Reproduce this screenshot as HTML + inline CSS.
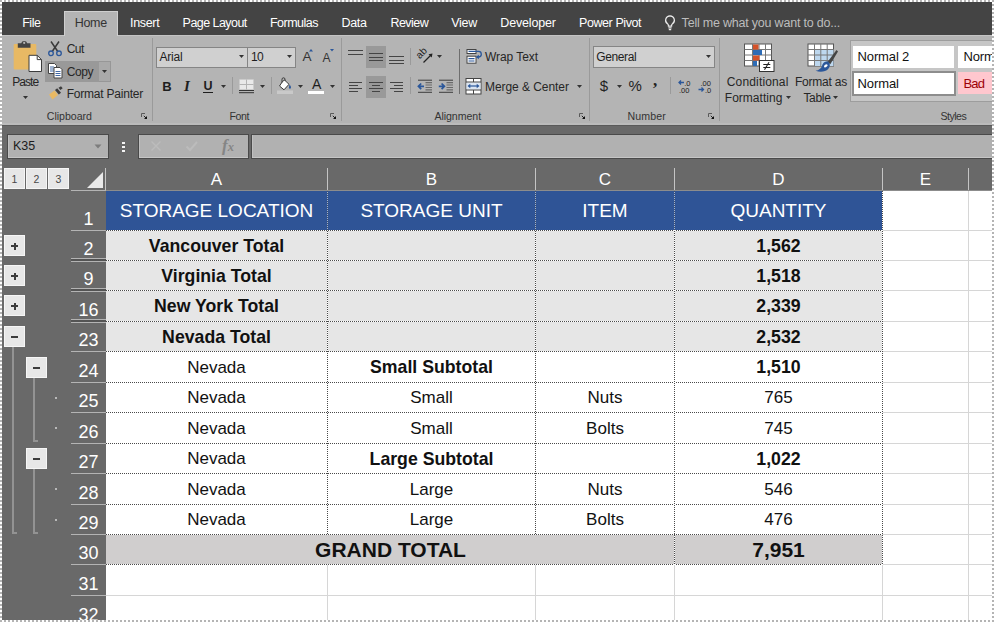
<!DOCTYPE html>
<html><head><meta charset="utf-8"><title>Excel Subtotals</title>
<style>
*{box-sizing:border-box;margin:0;padding:0}
html,body{width:994px;height:622px;overflow:hidden;background:#fff}
body{position:relative;font-family:"Liberation Sans",Arial,sans-serif;color:#222}
.abs{position:absolute}
.fr{z-index:20}
/* bands */
#tabs{left:2px;top:2px;width:992px;height:33px;background:#444}
#ribbon{left:2px;top:35px;width:992px;height:90px;background:#b4b4b4;border-top:1px solid #c4c4c4;border-bottom:2px solid #bbb}
#dark{left:2px;top:125px;width:992px;height:65px;background:#696969;border-top:1px solid #5a5a5a}
#leftdark{left:2px;top:190px;width:104px;height:432px;background:#696969}
/* tab labels */
.tab{position:absolute;top:15px;height:18px;line-height:18px;font-size:12.5px;color:#fff;white-space:nowrap}
#home{left:64px;top:11px;width:54px;height:25px;background:#b4b4b4}
/* ribbon text */
.rt{position:absolute;font-size:12.5px;line-height:16px;color:#262626;white-space:nowrap}
.gl{position:absolute;top:109px;font-size:11.5px;line-height:14px;color:#333;white-space:nowrap}
.vsep{position:absolute;width:1px;background:#9c9c9c}
/* formula bar */
.fbox{position:absolute;top:134px;height:25px;background:#b1b1b1;border:1px solid #4a4a4a;box-shadow:inset 0 -1px 0 #c6c6c6,inset 1px 0 0 #c0c0c0}
/* grid */
.ch{position:absolute;top:168px;height:22px;line-height:23px;color:#fff;font-size:17px;text-align:center}
.chs{position:absolute;top:168px;width:1px;height:23px;background:#c4c4c4}
.rh{position:absolute;left:71px;width:35px;height:20px;line-height:20px;color:#fff;font-size:18px;text-align:center}
.cell{position:absolute;font-size:17px;text-align:center;color:#111;white-space:nowrap;overflow:hidden}
.b{font-weight:bold;font-size:17.7px}
.ob{position:absolute;width:21px;height:21px;background:#e7e7e7;border:1px solid #f6f6f6;color:#484848;font-size:10.500px;line-height:20px;text-align:center}
.pm i{position:absolute;background:#3c3c3c}.pm .h{left:6px;top:9px;width:7px;height:2px}.pm .v{left:8.500px;top:6.500px;width:2px;height:7px}
</style></head><body>
<!-- dotted frame -->
<div class="abs fr" style="left:0;top:0;width:994px;height:2px;background:repeating-linear-gradient(90deg,#b4b4b4 0 2px,#fff 2px 4px)"></div>
<div class="abs fr" style="left:0;top:620px;width:994px;height:2px;background:repeating-linear-gradient(90deg,#b4b4b4 0 2px,#fff 2px 4px)"></div>
<div class="abs fr" style="left:0;top:0;width:2px;height:622px;background:repeating-linear-gradient(180deg,#b4b4b4 0 2px,#fff 2px 4px)"></div>
<div class="abs fr" style="left:992px;top:0;width:2px;height:622px;background:repeating-linear-gradient(180deg,#b4b4b4 0 2px,#fff 2px 4px)"></div>

<div id="tabs" class="abs"></div>
<div id="ribbon" class="abs"></div>
<div id="dark" class="abs"></div>
<div id="leftdark" class="abs"></div>


<!--RIBBON-->
<div id="home" class="abs" style="border:1px solid #cfcfcf;border-bottom:0"></div>
<svg class="abs" style="left:663px;top:14px" width="14" height="18" viewBox="0 0 14 18"><path d="M7 1.800a4.400 4.400 0 0 0-2.500 8c.6.500.9 1.100.9 1.800v.6h3.200v-.6c0-.7.300-1.300.9-1.800A4.400 4.400 0 0 0 7 1.800z" fill="none" stroke="#ececec" stroke-width="1.200"/><path d="M5.400 13.800h3.200M5.800 15.600h2.400" stroke="#ececec" stroke-width="1.200"/></svg>
<svg class="abs" style="left:12px;top:40px" width="31" height="33" viewBox="0 0 31 33">
<rect x="1.700" y="4" width="22.600" height="25.500" rx="1" fill="#e8b964"/>
<path d="M5.800 3.200h3.400a3.100 3.100 0 0 1 6 0h3.300v4.500H5.800z" fill="#444"/>
<circle cx="12.200" cy="2.900" r="1.100" fill="#b4b4b4"/>
<path d="M17 15.300h8.200l4.300 4.300V31.500H17z" fill="#fff" stroke="#3c3c3c" stroke-width="1"/>
<path d="M25.200 15.300v4.300h4.300" fill="none" stroke="#3c3c3c" stroke-width="1"/>
</svg>
<svg class="abs" style="left:23px;top:96px" width="5" height="3" viewBox="0 0 5 3"><polygon points="0,0 5,0 2.5,3" fill="#333"/></svg>
<svg class="abs" style="left:47px;top:40px" width="16" height="17" viewBox="0 0 16 17">
<path d="M4 1.500L10.800 11.500M12 1.500L5.200 11.500" stroke="#3a3a3a" stroke-width="1.500" fill="none"/>
<circle cx="4" cy="13.300" r="2.300" fill="none" stroke="#2b579a" stroke-width="1.300"/>
<circle cx="12" cy="13.300" r="2.300" fill="none" stroke="#2b579a" stroke-width="1.300"/>
</svg>
<div class="abs" style="left:45px;top:61px;width:54px;height:21px;background:#999"></div>
<div class="abs" style="left:99px;top:61px;width:12px;height:21px;background:#a9a9a9;border:1px solid #979797;border-left:0"></div>
<svg class="abs" style="left:48px;top:63px" width="15" height="16" viewBox="0 0 15 16">
<path d="M0.500 0.500h6l2 2v8h-8z" fill="#fff" stroke="#444" stroke-width="1"/>
<path d="M2 4h4M2 6h4M2 8h4" stroke="#2b579a" stroke-width="0.900"/>
<path d="M6 4.500h6l2 2v8.500h-8z" fill="#fff" stroke="#444" stroke-width="1"/>
<path d="M7.500 8.500h5M7.500 10.500h5M7.500 12.500h5" stroke="#2b579a" stroke-width="0.900"/>
</svg>
<svg class="abs" style="left:101.5px;top:70px" width="5" height="3" viewBox="0 0 5 3"><polygon points="0,0 5,0 2.5,3" fill="#333"/></svg>
<svg class="abs" style="left:48px;top:86px" width="16" height="15" viewBox="0 0 16 15">
<path d="M1 8.500l5.500-4 3.500 4.500-5.500 4.500z" fill="#e8b964"/>
<path d="M7 4l2.200-1.800 3.800 4.600L10.800 8.500z" fill="#3c3c3c"/>
<path d="M10.500 1.800L13 0.300l1.700 2L12.300 4z" fill="#3c3c3c"/>
</svg>
<svg class="abs" style="left:141px;top:113px" width="7" height="7" viewBox="0 0 7 7"><path d="M0.500 4V0.500H4" fill="none" stroke="#5a5a5a" stroke-width="1"/><path d="M2.800 2.800L5 5" fill="none" stroke="#222" stroke-width="1"/><path d="M6 3v3H3z" fill="#111"/></svg>
<div class="vsep" style="left:152px;top:38px;height:83px;background:#9a9a9a"></div>
<div class="abs" style="left:156px;top:47px;width:92px;height:21px;background:#d0d0d0;border:1px solid #858585"></div>
<div class="abs" style="left:247px;top:47px;width:49px;height:21px;background:#d0d0d0;border:1px solid #858585"></div>
<svg class="abs" style="left:238.7px;top:54.5px" width="5" height="3" viewBox="0 0 5 3"><polygon points="0,0 5,0 2.5,3" fill="#333"/></svg>
<svg class="abs" style="left:286.7px;top:54.5px" width="5" height="3" viewBox="0 0 5 3"><polygon points="0,0 5,0 2.5,3" fill="#333"/></svg>
<svg class="abs" style="left:309px;top:48.500px" width="4" height="3" viewBox="0 0 4 3"><polygon points="0,2.500 4,2.500 2,0" fill="#2b579a"/></svg>
<svg class="abs" style="left:329.500px;top:49px" width="4" height="3" viewBox="0 0 4 3"><polygon points="0,0 4,0 2,2.500" fill="#2b579a"/></svg>
<div class="abs" style="left:203px;top:92px;width:10px;height:1px;background:#1e1e1e"></div>
<svg class="abs" style="left:221px;top:84.5px" width="5" height="3" viewBox="0 0 5 3"><polygon points="0,0 5,0 2.5,3" fill="#333"/></svg>
<div class="vsep" style="left:232px;top:77px;height:17px;background:#9a9a9a"></div>
<svg class="abs" style="left:239px;top:79px" width="15" height="15" viewBox="0 0 15 15">
<rect x="0.500" y="0.500" width="14" height="10" fill="#e9e9e9" stroke="#c9c9c9" stroke-dasharray="1 1"/>
<path d="M7.500 0.500v10M0.500 5.500h14" stroke="#b4b4b4" stroke-width="1"/>
<path d="M0 11.500h15M0 13.700h15" stroke="#333" stroke-width="1"/>
</svg>
<svg class="abs" style="left:259.5px;top:84.5px" width="5" height="3" viewBox="0 0 5 3"><polygon points="0,0 5,0 2.5,3" fill="#333"/></svg>
<div class="vsep" style="left:271px;top:77px;height:17px;background:#9a9a9a"></div>
<svg class="abs" style="left:277px;top:77px" width="17" height="17" viewBox="0 0 17 17">
<path d="M5.500 4.500L2.500 9l4.500 3.800 5-5.500L7.500 3z" fill="#fff" stroke="#3a3a3a" stroke-width="1"/>
<path d="M5 5.500V2.300a1.500 1.500 0 0 1 3 0V4" fill="none" stroke="#3a3a3a" stroke-width="1"/>
<path d="M12.500 7.500c1.500 1.800 2 3 1 4-1 .6-2-.4-1.500-1.500z" fill="#2b579a"/>
<rect x="0" y="13.500" width="16" height="3.500" fill="#c9c9c9"/>
</svg>
<svg class="abs" style="left:298px;top:84.5px" width="5" height="3" viewBox="0 0 5 3"><polygon points="0,0 5,0 2.5,3" fill="#333"/></svg>
<div class="abs" style="left:308px;top:90.500px;width:16px;height:3.500px;background:#fff"></div>
<svg class="abs" style="left:329.5px;top:84.5px" width="5" height="3" viewBox="0 0 5 3"><polygon points="0,0 5,0 2.5,3" fill="#333"/></svg>
<svg class="abs" style="left:330px;top:113px" width="7" height="7" viewBox="0 0 7 7"><path d="M0.500 4V0.500H4" fill="none" stroke="#5a5a5a" stroke-width="1"/><path d="M2.800 2.800L5 5" fill="none" stroke="#222" stroke-width="1"/><path d="M6 3v3H3z" fill="#111"/></svg>
<div class="vsep" style="left:341px;top:38px;height:83px;background:#9a9a9a"></div>
<div class="abs" style="left:366px;top:46px;width:20px;height:22px;background:#999"></div>
<div class="abs" style="left:366px;top:76px;width:20px;height:22px;background:#999"></div>
<div class="abs" style="left:348px;top:50px;width:15px;height:1px;background:#444"></div>
<div class="abs" style="left:348px;top:54px;width:15px;height:1px;background:#444"></div>
<div class="abs" style="left:369px;top:53px;width:14px;height:1px;background:#444"></div>
<div class="abs" style="left:369px;top:56.5px;width:14px;height:1px;background:#444"></div>
<div class="abs" style="left:369px;top:60px;width:14px;height:1px;background:#444"></div>
<div class="abs" style="left:389px;top:56px;width:15px;height:1px;background:#444"></div>
<div class="abs" style="left:389px;top:59.5px;width:15px;height:1px;background:#444"></div>
<div class="abs" style="left:389px;top:63px;width:15px;height:1px;background:#444"></div>
<div class="vsep" style="left:410px;top:48px;height:17px;background:#9a9a9a"></div>
<svg class="abs" style="left:416px;top:48px" width="18" height="16" viewBox="0 0 18 16">
<text x="0" y="0" font-family="Liberation Sans" font-size="10" fill="#222" transform="translate(3.800 11.300) rotate(-45)">ab</text>
<path d="M7.500 14.500L15 7" fill="none" stroke="#222" stroke-width="1.200"/>
<path d="M16.500 5.500l-4 .8 3.200 3.200z" fill="#222"/>
</svg>
<svg class="abs" style="left:436.5px;top:55px" width="5" height="3" viewBox="0 0 5 3"><polygon points="0,0 5,0 2.5,3" fill="#333"/></svg>
<div class="vsep" style="left:459px;top:49px;height:45px;background:#6e6e6e"></div>
<svg class="abs" style="left:465px;top:48px" width="18" height="17" viewBox="0 0 18 17">
<rect x="2" y="1.500" width="9" height="4" fill="#fff" stroke="#444"/>
<rect x="2" y="8.200" width="9" height="7" fill="#fff" stroke="#444"/>
<path d="M3.500 10.600h6M3.500 13h6" stroke="#2b579a" stroke-width="1.100"/>
<path d="M3.500 3.400H13.500a2.800 2.800 0 0 1 0 5.600H12.500" fill="none" stroke="#2b579a" stroke-width="1.300"/>
<path d="M10.800 9l3-2.300v4.600z" fill="#2b579a"/>
</svg>
<div class="abs" style="left:349px;top:81.5px;width:13px;height:1px;background:#444"></div>
<div class="abs" style="left:349px;top:84.5px;width:9px;height:1px;background:#444"></div>
<div class="abs" style="left:349px;top:87.5px;width:13px;height:1px;background:#444"></div>
<div class="abs" style="left:349px;top:90.5px;width:9px;height:1px;background:#444"></div>
<div class="abs" style="left:369.0px;top:81.5px;width:14px;height:1px;background:#444"></div>
<div class="abs" style="left:372.0px;top:84.5px;width:8px;height:1px;background:#444"></div>
<div class="abs" style="left:369.0px;top:87.5px;width:14px;height:1px;background:#444"></div>
<div class="abs" style="left:372.0px;top:90.5px;width:8px;height:1px;background:#444"></div>
<div class="abs" style="left:390px;top:81.5px;width:13px;height:1px;background:#444"></div>
<div class="abs" style="left:394px;top:84.5px;width:9px;height:1px;background:#444"></div>
<div class="abs" style="left:390px;top:87.5px;width:13px;height:1px;background:#444"></div>
<div class="abs" style="left:394px;top:90.5px;width:9px;height:1px;background:#444"></div>
<div class="vsep" style="left:410px;top:77px;height:17px;background:#9a9a9a"></div>
<svg class="abs" style="left:417px;top:79px" width="16" height="15" viewBox="0 0 16 15">
<path d="M1 1.200h14M1 13.300h14" stroke="#3c3c3c" stroke-width="1" fill="none"/>
<path d="M8.500 3.600h6.500M8.500 6h6.500M8.500 8.500h6.500M8.500 10.900h6.500" stroke="#6a6a6a" stroke-width="1.100" fill="none"/>
<path d="M7 7.300H1.800M4.200 4.500L1.400 7.300l2.800 2.800" stroke="#2b579a" stroke-width="1.700" fill="none"/>
</svg>
<svg class="abs" style="left:437.8px;top:79px" width="16" height="15" viewBox="0 0 16 15">
<path d="M1 1.200h14M1 13.300h14" stroke="#3c3c3c" stroke-width="1" fill="none"/>
<path d="M8.500 3.600h6.500M8.500 6h6.500M8.500 8.500h6.500M8.500 10.900h6.500" stroke="#6a6a6a" stroke-width="1.100" fill="none"/>
<path d="M0.800 7.300H6M3.600 4.500l2.800 2.800-2.800 2.800" stroke="#2b579a" stroke-width="1.700" fill="none"/>
</svg>
<svg class="abs" style="left:465px;top:78px" width="17" height="17" viewBox="0 0 17 17">
<rect x="1" y="0.500" width="15" height="15.500" fill="#fff" stroke="#444"/>
<rect x="1.500" y="4.500" width="14" height="7" fill="#dbe5f1"/>
<path d="M1 4h15M1 12h15M8.500 0.500v3.500M8.500 12v4" stroke="#444" stroke-width="1" fill="none"/>
<path d="M4 8h9" stroke="#2b579a" stroke-width="1.200" fill="none"/>
<path d="M2.500 8l2.800-2.300v4.600zM14.500 8l-2.800-2.300v4.600z" fill="#2b579a"/>
</svg>
<svg class="abs" style="left:577.3px;top:85px" width="5" height="3" viewBox="0 0 5 3"><polygon points="0,0 5,0 2.5,3" fill="#333"/></svg>
<svg class="abs" style="left:578.5px;top:113px" width="7" height="7" viewBox="0 0 7 7"><path d="M0.500 4V0.500H4" fill="none" stroke="#5a5a5a" stroke-width="1"/><path d="M2.800 2.800L5 5" fill="none" stroke="#222" stroke-width="1"/><path d="M6 3v3H3z" fill="#111"/></svg>
<div class="vsep" style="left:589px;top:38px;height:83px;background:#9a9a9a"></div>
<div class="abs" style="left:593px;top:46px;width:122px;height:22px;background:#d0d0d0;border:1px solid #858585"></div>
<svg class="abs" style="left:706.3px;top:55px" width="5" height="3" viewBox="0 0 5 3"><polygon points="0,0 5,0 2.5,3" fill="#333"/></svg>
<svg class="abs" style="left:616.8px;top:84.8px" width="5" height="3" viewBox="0 0 5 3"><polygon points="0,0 5,0 2.5,3" fill="#333"/></svg>
<div class="vsep" style="left:670px;top:77px;height:17px;background:#9a9a9a"></div>
<svg class="abs" style="left:677.5px;top:79px" width="14" height="15" viewBox="0 0 14 15">
<path d="M6 3.500H1M3 1.500L1 3.500l2 2" stroke="#2b579a" stroke-width="1.300" fill="none"/>
<text x="6.200" y="6.500" font-family="Liberation Sans" font-size="7.500" fill="#222">.0</text>
<text x="1" y="14" font-family="Liberation Sans" font-size="7.500" fill="#222">.00</text></svg>
<svg class="abs" style="left:698px;top:79px" width="14" height="15" viewBox="0 0 14 15">
<text x="2.500" y="6.500" font-family="Liberation Sans" font-size="7.500" fill="#222">.00</text>
<path d="M0.500 10.500H5.500M3.500 8.500l2 2-2 2" stroke="#2b579a" stroke-width="1.300" fill="none"/>
<text x="7" y="14" font-family="Liberation Sans" font-size="7.500" fill="#222">.0</text></svg>
<svg class="abs" style="left:708px;top:113px" width="7" height="7" viewBox="0 0 7 7"><path d="M0.500 4V0.500H4" fill="none" stroke="#5a5a5a" stroke-width="1"/><path d="M2.800 2.800L5 5" fill="none" stroke="#222" stroke-width="1"/><path d="M6 3v3H3z" fill="#111"/></svg>
<div class="vsep" style="left:719px;top:38px;height:83px;background:#9a9a9a"></div>
<svg class="abs" style="left:744px;top:43px" width="31" height="30" viewBox="0 0 31 30">
<rect x="0.500" y="1" width="27" height="22" fill="#fff" stroke="#555"/>
<path d="M0.500 6.500h27M0.500 12h27M0.500 17.500h27M8.500 1v22M15 1v22M21.500 1v22" stroke="#777" stroke-width="1" fill="none"/>
<rect x="9" y="1.500" width="5.500" height="5" fill="#d4522a"/>
<rect x="9" y="7" width="9" height="5" fill="#2e6cb5"/>
<rect x="9" y="12.500" width="6.500" height="5" fill="#d4522a"/>
<rect x="9" y="18" width="4" height="5" fill="#2e6cb5"/>
<rect x="15.500" y="17.500" width="14.500" height="11" fill="#fff" stroke="#333"/>
<path d="M19.300 21.500h7M19.300 24.500h7M25 19.300l-4.500 7.500" stroke="#222" stroke-width="1.100" fill="none"/>
</svg>
<svg class="abs" style="left:785.7px;top:95.6px" width="5" height="3" viewBox="0 0 5 3"><polygon points="0,0 5,0 2.5,3" fill="#333"/></svg>
<svg class="abs" style="left:807px;top:43px" width="32" height="30" viewBox="0 0 32 30">
<rect x="1" y="1" width="25.500" height="22" fill="#fff" stroke="#555"/>
<rect x="7.500" y="6.500" width="19" height="16.500" fill="#bdd7ee"/>
<path d="M1 6.500h25.500M1 12h25.500M1 17.500h25.500M7.500 1v22M13.800 1v22M20.200 1v22" stroke="#777" stroke-width="1" fill="none"/>
<path d="M31 8.500l-1.500-1.500-9 12 2.800 2.200z" fill="#444"/>
<path d="M21.500 18.800c-3.500-1-6 1.500-6.500 4.200-.8 2.500-3 4.200-6.500 4.800 5 1.600 10 1 12.700-1.800 2-2 2.300-4.800 .3-7.200z" fill="#2b579a"/>
<ellipse cx="18.800" cy="22.800" rx="2" ry="1.300" fill="#fff" transform="rotate(-35 18.800 22.800)"/>
</svg>
<svg class="abs" style="left:833.4px;top:95.6px" width="5" height="3" viewBox="0 0 5 3"><polygon points="0,0 5,0 2.5,3" fill="#333"/></svg>
<div class="abs" style="left:850px;top:40px;width:144px;height:62px;background:#c6c6c6;border:1px solid #9d9d9d;border-right:0"></div>
<div class="abs" style="left:853px;top:46px;width:101px;height:22px;background:#fff"></div>
<div class="abs" style="left:958px;top:46px;width:36px;height:22px;background:#fff"></div>
<div class="abs" style="left:852px;top:71px;width:104px;height:25px;background:#fff;border:2px solid #8d8d8d"></div>
<div class="abs" style="left:958px;top:72px;width:36px;height:22px;background:#ffc7ce"></div>
<div class="rt" style="left:22.2px;top:14.6px;font-size:12.5px;line-height:16px;color:#fff;letter-spacing:-0.46px;">File</div>
<div class="rt" style="left:74.7px;top:14.6px;font-size:12.5px;line-height:16px;color:#333;letter-spacing:-0.29px;">Home</div>
<div class="rt" style="left:130.1px;top:14.6px;font-size:12.5px;line-height:16px;color:#fff;letter-spacing:-0.34px;">Insert</div>
<div class="rt" style="left:182.6px;top:14.6px;font-size:12.5px;line-height:16px;color:#fff;letter-spacing:-0.55px;">Page Layout</div>
<div class="rt" style="left:269.9px;top:14.6px;font-size:12.5px;line-height:16px;color:#fff;letter-spacing:-0.50px;">Formulas</div>
<div class="rt" style="left:341.6px;top:14.6px;font-size:12.5px;line-height:16px;color:#fff;letter-spacing:-0.38px;">Data</div>
<div class="rt" style="left:390.4px;top:14.6px;font-size:12.5px;line-height:16px;color:#fff;letter-spacing:-0.52px;">Review</div>
<div class="rt" style="left:451.2px;top:14.6px;font-size:12.5px;line-height:16px;color:#fff;letter-spacing:-0.24px;">View</div>
<div class="rt" style="left:500.3px;top:14.6px;font-size:12.5px;line-height:16px;color:#fff;letter-spacing:-0.16px;">Developer</div>
<div class="rt" style="left:579px;top:14.6px;font-size:12.5px;line-height:16px;color:#fff;letter-spacing:-0.42px;">Power Pivot</div>
<div class="rt" style="left:681.6px;top:14.6px;font-size:12.5px;line-height:16px;color:#bdbdbd;letter-spacing:-0.21px;">Tell me what you want to do...</div>
<div class="rt" style="left:12.2px;top:73.5px;font-size:12px;line-height:16px;color:#262626;letter-spacing:-0.94px;">Paste</div>
<div class="rt" style="left:66.7px;top:40.7px;font-size:12px;line-height:16px;color:#262626;letter-spacing:-0.50px;">Cut</div>
<div class="rt" style="left:66.7px;top:63.7px;font-size:12px;line-height:16px;color:#262626;letter-spacing:-0.38px;">Copy</div>
<div class="rt" style="left:66.7px;top:85.5px;font-size:12px;line-height:16px;color:#262626;letter-spacing:-0.21px;">Format Painter</div>
<div class="rt" style="left:46.8px;top:108.7px;font-size:10.6px;line-height:14px;color:#333;letter-spacing:-0.02px;">Clipboard</div>
<div class="rt" style="left:159.4px;top:49.3px;font-size:12px;line-height:16px;color:#1e1e1e;letter-spacing:-0.20px;">Arial</div>
<div class="rt" style="left:251px;top:49.3px;font-size:12px;line-height:16px;color:#1e1e1e;letter-spacing:-0.78px;">10</div>
<div class="rt" style="left:302.6px;top:48.3px;font-size:13.5px;line-height:18px;color:#333;">A</div>
<div class="rt" style="left:322.6px;top:49.8px;font-size:12px;line-height:16px;color:#333;">A</div>
<div class="rt" style="left:162.2px;top:78.0px;font-size:13px;line-height:17px;color:#1e1e1e;font-weight:bold;">B</div>
<div class="rt" style="left:184px;top:75.8px;font-size:15px;line-height:20px;color:#1e1e1e;font-weight:bold;font-style:italic;font-family:'Liberation Serif',serif;">I</div>
<div class="rt" style="left:203.6px;top:78.2px;font-size:12.5px;line-height:16px;color:#1e1e1e;font-weight:bold;">U</div>
<div class="rt" style="left:312px;top:75.1px;font-size:14px;line-height:18px;color:#1e1e1e;">A</div>
<div class="rt" style="left:229.5px;top:108.7px;font-size:10.6px;line-height:14px;color:#333;letter-spacing:-0.43px;">Font</div>
<div class="rt" style="left:485px;top:49.2px;font-size:12px;line-height:16px;color:#262626;letter-spacing:-0.06px;">Wrap Text</div>
<div class="rt" style="left:485px;top:78.7px;font-size:12px;line-height:16px;color:#262626;letter-spacing:-0.06px;">Merge &amp; Center</div>
<div class="rt" style="left:434.4px;top:108.7px;font-size:10.6px;line-height:14px;color:#333;letter-spacing:-0.05px;">Alignment</div>
<div class="rt" style="left:596.2px;top:49.0px;font-size:12px;line-height:16px;color:#1e1e1e;letter-spacing:-0.37px;">General</div>
<div class="rt" style="left:599.7px;top:75.8px;font-size:15px;line-height:20px;color:#222;">$</div>
<div class="rt" style="left:628.5px;top:75.8px;font-size:15px;line-height:20px;color:#222;">%</div>
<div class="rt" style="left:653px;top:70.1px;font-size:17px;line-height:22px;color:#222;font-weight:bold;font-family:'Liberation Serif',serif;">,</div>
<div class="rt" style="left:627.6px;top:108.7px;font-size:10.6px;line-height:14px;color:#333;letter-spacing:0.09px;">Number</div>
<div class="rt" style="left:726.8px;top:74.2px;font-size:12px;line-height:16px;color:#262626;letter-spacing:0.15px;">Conditional</div>
<div class="rt" style="left:724.8px;top:90.2px;font-size:12px;line-height:16px;color:#262626;letter-spacing:0.02px;">Formatting</div>
<div class="rt" style="left:795px;top:74.2px;font-size:12px;line-height:16px;color:#262626;letter-spacing:-0.22px;">Format as</div>
<div class="rt" style="left:803.4px;top:90.2px;font-size:12px;line-height:16px;color:#262626;letter-spacing:-0.30px;">Table</div>
<div class="rt" style="left:857.6px;top:48.1px;font-size:13px;line-height:17px;color:#111;letter-spacing:-0.14px;">Normal 2</div>
<div class="rt" style="left:963.4px;top:48.1px;font-size:13px;line-height:17px;color:#111;letter-spacing:-0.14px;">Normal 3</div>
<div class="rt" style="left:857.6px;top:74.8px;font-size:13px;line-height:17px;color:#111;letter-spacing:-0.12px;">Normal</div>
<div class="rt" style="left:963.4px;top:74.8px;font-size:13px;line-height:17px;color:#9c0006;letter-spacing:-0.71px;">Bad</div>
<div class="rt" style="left:940.4px;top:108.7px;font-size:10.6px;line-height:14px;color:#333;letter-spacing:-0.51px;">Styles</div>
<!--/RIBBON-->
<!--FBAR-->
<div class="fbox" style="left:7px;width:102px"></div>
<div class="abs" style="left:13px;top:138px;font-size:12.5px;line-height:17px;color:#1c1c1c">K35</div>
<svg class="abs" style="left:94px;top:144px" width="8" height="5" viewBox="0 0 8 5"><polygon points="0.5,0.5 7.500,0.500 4,4.500" fill="#7d7d7d"/></svg>
<div class="abs" style="left:122px;top:141.5px;width:3px;height:2.500px;background:#f4f4f4"></div>
<div class="abs" style="left:122px;top:145.5px;width:3px;height:2.500px;background:#f4f4f4"></div>
<div class="abs" style="left:122px;top:149.5px;width:3px;height:2.500px;background:#f4f4f4"></div>
<div class="fbox" style="left:138px;width:111px"></div>
<svg class="abs" style="left:150px;top:140px" width="12" height="12" viewBox="0 0 12 12"><path d="M1.500 1.500l9 9M10.500 1.500l-9 9" stroke="#bcbcbc" stroke-width="1.300" fill="none"/></svg>
<svg class="abs" style="left:185px;top:140px" width="14" height="12" viewBox="0 0 14 12"><path d="M1.500 6.500l3.500 3.500L12 2" stroke="#bcbcbc" stroke-width="1.900" fill="none"/></svg>
<div class="abs" style="left:222px;top:136px;font-family:'Liberation Serif',serif;font-style:italic;font-size:17px;line-height:19px;color:#858585;font-weight:bold">f<span style="font-size:12.500px">x</span></div>
<div class="fbox" style="left:251px;width:745px"></div>
<!-- outline level buttons -->
<div class="ob" style="left:4px;top:168px">1</div>
<div class="ob" style="left:26px;top:168px">2</div>
<div class="ob" style="left:48px;top:168px">3</div>
<!-- outline brackets -->
<div class="abs" style="left:12px;top:346px;width:2px;height:187px;background:#939393"></div>
<div class="abs" style="left:12px;top:532px;width:5px;height:2px;background:#939393"></div>
<div class="abs" style="left:33px;top:377px;width:2px;height:65px;background:#939393"></div>
<div class="abs" style="left:33px;top:440px;width:5px;height:2px;background:#939393"></div>
<div class="abs" style="left:33px;top:468px;width:2px;height:65px;background:#939393"></div>
<div class="abs" style="left:33px;top:532px;width:5px;height:2px;background:#939393"></div>
<!-- +/- buttons -->
<div class="ob pm" style="left:4px;top:235px"><i class="h"></i><i class="v"></i></div>
<div class="ob pm" style="left:4px;top:265px"><i class="h"></i><i class="v"></i></div>
<div class="ob pm" style="left:4px;top:295px"><i class="h"></i><i class="v"></i></div>
<div class="ob pm" style="left:4px;top:326px"><i class="h"></i></div>
<div class="ob pm" style="left:26px;top:357px"><i class="h"></i></div>
<div class="ob pm" style="left:26px;top:448px"><i class="h"></i></div>
<!-- level dots -->
<div class="abs" style="left:55px;top:397px;width:2px;height:2px;background:#b9b9b9"></div>
<div class="abs" style="left:55px;top:427px;width:2px;height:2px;background:#b9b9b9"></div>
<div class="abs" style="left:55px;top:488px;width:2px;height:2px;background:#b9b9b9"></div>
<div class="abs" style="left:55px;top:519px;width:2px;height:2px;background:#b9b9b9"></div>
<!--/FBAR-->
<!--GRID-->
<div class="abs" style="left:106px;top:190px;width:888px;height:432px;background:#fff"></div>
<div class="abs" style="left:106px;top:230px;width:886px;height:1px;background:#d6d6d6"></div>
<div class="abs" style="left:106px;top:260px;width:886px;height:1px;background:#d6d6d6"></div>
<div class="abs" style="left:106px;top:290px;width:886px;height:1px;background:#d6d6d6"></div>
<div class="abs" style="left:106px;top:321px;width:886px;height:1px;background:#d6d6d6"></div>
<div class="abs" style="left:106px;top:351px;width:886px;height:1px;background:#d6d6d6"></div>
<div class="abs" style="left:106px;top:382px;width:886px;height:1px;background:#d6d6d6"></div>
<div class="abs" style="left:106px;top:412px;width:886px;height:1px;background:#d6d6d6"></div>
<div class="abs" style="left:106px;top:443px;width:886px;height:1px;background:#d6d6d6"></div>
<div class="abs" style="left:106px;top:473px;width:886px;height:1px;background:#d6d6d6"></div>
<div class="abs" style="left:106px;top:504px;width:886px;height:1px;background:#d6d6d6"></div>
<div class="abs" style="left:106px;top:534px;width:886px;height:1px;background:#d6d6d6"></div>
<div class="abs" style="left:106px;top:564px;width:886px;height:1px;background:#d6d6d6"></div>
<div class="abs" style="left:106px;top:595px;width:886px;height:1px;background:#d6d6d6"></div>
<div class="abs" style="left:327px;top:190px;width:1px;height:430px;background:#d6d6d6"></div>
<div class="abs" style="left:535px;top:190px;width:1px;height:430px;background:#d6d6d6"></div>
<div class="abs" style="left:674px;top:190px;width:1px;height:430px;background:#d6d6d6"></div>
<div class="abs" style="left:882px;top:190px;width:1px;height:430px;background:#d6d6d6"></div>
<div class="abs" style="left:968px;top:190px;width:1px;height:430px;background:#d6d6d6"></div>
<div class="abs" style="left:106px;top:191px;width:776px;height:40px;background:#2f5496"></div>
<div class="abs" style="left:106px;top:231px;width:776px;height:120px;background:#e6e6e6"></div>
<div class="abs" style="left:106px;top:535px;width:776px;height:29px;background:#d0cece"></div>
<div class="abs" style="left:106px;top:230px;width:776px;height:1px;background:#fff"></div>
<div class="abs" style="left:106px;top:230px;width:776px;height:1px;background:repeating-linear-gradient(90deg,#4a4a4a 0 1px,transparent 1px 2px)"></div>
<div class="abs" style="left:106px;top:260px;width:776px;height:1px;background:#fff"></div>
<div class="abs" style="left:106px;top:260px;width:776px;height:1px;background:repeating-linear-gradient(90deg,#4a4a4a 0 1px,transparent 1px 2px)"></div>
<div class="abs" style="left:106px;top:290px;width:776px;height:1px;background:#fff"></div>
<div class="abs" style="left:106px;top:290px;width:776px;height:1px;background:repeating-linear-gradient(90deg,#4a4a4a 0 1px,transparent 1px 2px)"></div>
<div class="abs" style="left:106px;top:321px;width:776px;height:1px;background:#fff"></div>
<div class="abs" style="left:106px;top:321px;width:776px;height:1px;background:repeating-linear-gradient(90deg,#4a4a4a 0 1px,transparent 1px 2px)"></div>
<div class="abs" style="left:106px;top:351px;width:776px;height:1px;background:#fff"></div>
<div class="abs" style="left:106px;top:351px;width:776px;height:1px;background:repeating-linear-gradient(90deg,#4a4a4a 0 1px,transparent 1px 2px)"></div>
<div class="abs" style="left:106px;top:382px;width:776px;height:1px;background:#fff"></div>
<div class="abs" style="left:106px;top:382px;width:776px;height:1px;background:repeating-linear-gradient(90deg,#4a4a4a 0 1px,transparent 1px 2px)"></div>
<div class="abs" style="left:106px;top:412px;width:776px;height:1px;background:#fff"></div>
<div class="abs" style="left:106px;top:412px;width:776px;height:1px;background:repeating-linear-gradient(90deg,#4a4a4a 0 1px,transparent 1px 2px)"></div>
<div class="abs" style="left:106px;top:443px;width:776px;height:1px;background:#fff"></div>
<div class="abs" style="left:106px;top:443px;width:776px;height:1px;background:repeating-linear-gradient(90deg,#4a4a4a 0 1px,transparent 1px 2px)"></div>
<div class="abs" style="left:106px;top:473px;width:776px;height:1px;background:#fff"></div>
<div class="abs" style="left:106px;top:473px;width:776px;height:1px;background:repeating-linear-gradient(90deg,#4a4a4a 0 1px,transparent 1px 2px)"></div>
<div class="abs" style="left:106px;top:504px;width:776px;height:1px;background:#fff"></div>
<div class="abs" style="left:106px;top:504px;width:776px;height:1px;background:repeating-linear-gradient(90deg,#4a4a4a 0 1px,transparent 1px 2px)"></div>
<div class="abs" style="left:106px;top:534px;width:776px;height:1px;background:#fff"></div>
<div class="abs" style="left:106px;top:534px;width:776px;height:1px;background:repeating-linear-gradient(90deg,#4a4a4a 0 1px,transparent 1px 2px)"></div>
<div class="abs" style="left:106px;top:564px;width:776px;height:1px;background:#fff"></div>
<div class="abs" style="left:106px;top:564px;width:776px;height:1px;background:repeating-linear-gradient(90deg,#4a4a4a 0 1px,transparent 1px 2px)"></div>
<div class="abs" style="left:327px;top:191px;width:1px;height:343px;background:#fff"></div>
<div class="abs" style="left:327px;top:191px;width:1px;height:343px;background:repeating-linear-gradient(180deg,#4a4a4a 0 1px,transparent 1px 2px)"></div>
<div class="abs" style="left:327px;top:191px;width:1px;height:39px;background:rgba(47,84,150,.45)"></div>
<div class="abs" style="left:535px;top:191px;width:1px;height:343px;background:#fff"></div>
<div class="abs" style="left:535px;top:191px;width:1px;height:343px;background:repeating-linear-gradient(180deg,#4a4a4a 0 1px,transparent 1px 2px)"></div>
<div class="abs" style="left:535px;top:191px;width:1px;height:39px;background:rgba(47,84,150,.45)"></div>
<div class="abs" style="left:674px;top:191px;width:1px;height:343px;background:#fff"></div>
<div class="abs" style="left:674px;top:191px;width:1px;height:343px;background:repeating-linear-gradient(180deg,#4a4a4a 0 1px,transparent 1px 2px)"></div>
<div class="abs" style="left:674px;top:191px;width:1px;height:39px;background:rgba(47,84,150,.45)"></div>
<div class="abs" style="left:882px;top:191px;width:1px;height:343px;background:#fff"></div>
<div class="abs" style="left:882px;top:191px;width:1px;height:343px;background:repeating-linear-gradient(180deg,#4a4a4a 0 1px,transparent 1px 2px)"></div>
<div class="abs" style="left:674px;top:535px;width:1px;height:30px;background:#fff"></div>
<div class="abs" style="left:674px;top:535px;width:1px;height:30px;background:repeating-linear-gradient(180deg,#4a4a4a 0 1px,transparent 1px 2px)"></div>
<div class="abs" style="left:882px;top:535px;width:1px;height:30px;background:#fff"></div>
<div class="abs" style="left:882px;top:535px;width:1px;height:30px;background:repeating-linear-gradient(180deg,#4a4a4a 0 1px,transparent 1px 2px)"></div>
<div class="cell" style="left:106px;top:190px;width:221px;height:40px;line-height:42px;font-size:19px;color:#fff">STORAGE LOCATION</div>
<div class="cell" style="left:328px;top:190px;width:207px;height:40px;line-height:42px;font-size:19px;color:#fff">STORAGE UNIT</div>
<div class="cell" style="left:536px;top:190px;width:138px;height:40px;line-height:42px;font-size:19px;color:#fff">ITEM</div>
<div class="cell" style="left:675px;top:190px;width:207px;height:40px;line-height:42px;font-size:19px;color:#fff">QUANTITY</div>
<div class="cell b" style="left:106px;top:231px;width:221px;height:29px;line-height:30px">Vancouver Total</div>
<div class="cell b" style="left:675px;top:231px;width:207px;height:29px;line-height:30px">1,562</div>
<div class="cell b" style="left:106px;top:261px;width:221px;height:29px;line-height:30px">Virginia Total</div>
<div class="cell b" style="left:675px;top:261px;width:207px;height:29px;line-height:30px">1,518</div>
<div class="cell b" style="left:106px;top:291px;width:221px;height:30px;line-height:31px">New York Total</div>
<div class="cell b" style="left:675px;top:291px;width:207px;height:30px;line-height:31px">2,339</div>
<div class="cell b" style="left:106px;top:322px;width:221px;height:29px;line-height:30px">Nevada Total</div>
<div class="cell b" style="left:675px;top:322px;width:207px;height:29px;line-height:30px">2,532</div>
<div class="cell" style="left:106px;top:352px;width:221px;height:30px;line-height:31px">Nevada</div>
<div class="cell b" style="left:328px;top:352px;width:207px;height:30px;line-height:31px">Small Subtotal</div>
<div class="cell b" style="left:675px;top:352px;width:207px;height:30px;line-height:31px">1,510</div>
<div class="cell" style="left:106px;top:383px;width:221px;height:29px;line-height:30px">Nevada</div>
<div class="cell" style="left:328px;top:383px;width:207px;height:29px;line-height:30px">Small</div>
<div class="cell" style="left:536px;top:383px;width:138px;height:29px;line-height:30px">Nuts</div>
<div class="cell" style="left:675px;top:383px;width:207px;height:29px;line-height:30px">765</div>
<div class="cell" style="left:106px;top:413px;width:221px;height:30px;line-height:31px">Nevada</div>
<div class="cell" style="left:328px;top:413px;width:207px;height:30px;line-height:31px">Small</div>
<div class="cell" style="left:536px;top:413px;width:138px;height:30px;line-height:31px">Bolts</div>
<div class="cell" style="left:675px;top:413px;width:207px;height:30px;line-height:31px">745</div>
<div class="cell" style="left:106px;top:444px;width:221px;height:29px;line-height:30px">Nevada</div>
<div class="cell b" style="left:328px;top:444px;width:207px;height:29px;line-height:30px">Large Subtotal</div>
<div class="cell b" style="left:675px;top:444px;width:207px;height:29px;line-height:30px">1,022</div>
<div class="cell" style="left:106px;top:474px;width:221px;height:30px;line-height:31px">Nevada</div>
<div class="cell" style="left:328px;top:474px;width:207px;height:30px;line-height:31px">Large</div>
<div class="cell" style="left:536px;top:474px;width:138px;height:30px;line-height:31px">Nuts</div>
<div class="cell" style="left:675px;top:474px;width:207px;height:30px;line-height:31px">546</div>
<div class="cell" style="left:106px;top:505px;width:221px;height:29px;line-height:30px">Nevada</div>
<div class="cell" style="left:328px;top:505px;width:207px;height:29px;line-height:30px">Large</div>
<div class="cell" style="left:536px;top:505px;width:138px;height:29px;line-height:30px">Bolts</div>
<div class="cell" style="left:675px;top:505px;width:207px;height:29px;line-height:30px">476</div>
<div class="cell b" style="left:106px;top:535px;width:569px;height:29px;line-height:30px;font-size:21px">GRAND TOTAL</div>
<div class="cell b" style="left:675px;top:535px;width:207px;height:29px;line-height:30px;font-size:21px">7,951</div>
<div class="ch" style="left:106px;width:221px">A</div>
<div class="ch" style="left:328px;width:207px">B</div>
<div class="ch" style="left:536px;width:138px">C</div>
<div class="ch" style="left:675px;width:207px">D</div>
<div class="ch" style="left:883px;width:85px">E</div>
<div class="chs" style="left:105px"></div>
<div class="chs" style="left:327px"></div>
<div class="chs" style="left:535px"></div>
<div class="chs" style="left:674px"></div>
<div class="chs" style="left:882px"></div>
<div class="chs" style="left:968px"></div>
<div class="abs" style="left:71px;top:190px;width:35px;height:1px;background:#b4b4b4"></div>
<div class="abs" style="left:106px;top:190px;width:886px;height:1px;background:#8c8c8c"></div>
<div class="rh" style="top:209.1px">1</div>
<div class="abs" style="left:71px;top:230px;width:35px;height:1px;background:#b4b4b4"></div>
<div class="rh" style="top:239.1px">2</div>
<div class="abs" style="left:71px;top:258px;width:35px;height:1px;background:#b4b4b4"></div>
<div class="abs" style="left:71px;top:259px;width:35px;height:2px;background:#545454"></div>
<div class="abs" style="left:71px;top:261px;width:35px;height:1px;background:#b4b4b4"></div>
<div class="rh" style="top:269.1px">9</div>
<div class="abs" style="left:71px;top:288px;width:35px;height:1px;background:#b4b4b4"></div>
<div class="abs" style="left:71px;top:289px;width:35px;height:2px;background:#545454"></div>
<div class="abs" style="left:71px;top:291px;width:35px;height:1px;background:#b4b4b4"></div>
<div class="rh" style="top:300.1px">16</div>
<div class="abs" style="left:71px;top:319px;width:35px;height:1px;background:#b4b4b4"></div>
<div class="abs" style="left:71px;top:320px;width:35px;height:2px;background:#545454"></div>
<div class="abs" style="left:71px;top:322px;width:35px;height:1px;background:#b4b4b4"></div>
<div class="rh" style="top:330.1px">23</div>
<div class="abs" style="left:71px;top:351px;width:35px;height:1px;background:#b4b4b4"></div>
<div class="rh" style="top:361.1px">24</div>
<div class="abs" style="left:71px;top:382px;width:35px;height:1px;background:#b4b4b4"></div>
<div class="rh" style="top:391.1px">25</div>
<div class="abs" style="left:71px;top:412px;width:35px;height:1px;background:#b4b4b4"></div>
<div class="rh" style="top:422.1px">26</div>
<div class="abs" style="left:71px;top:443px;width:35px;height:1px;background:#b4b4b4"></div>
<div class="rh" style="top:452.1px">27</div>
<div class="abs" style="left:71px;top:473px;width:35px;height:1px;background:#b4b4b4"></div>
<div class="rh" style="top:483.1px">28</div>
<div class="abs" style="left:71px;top:504px;width:35px;height:1px;background:#b4b4b4"></div>
<div class="rh" style="top:513.1px">29</div>
<div class="abs" style="left:71px;top:534px;width:35px;height:1px;background:#b4b4b4"></div>
<div class="rh" style="top:543.1px">30</div>
<div class="abs" style="left:71px;top:564px;width:35px;height:1px;background:#b4b4b4"></div>
<div class="rh" style="top:574.1px">31</div>
<div class="abs" style="left:71px;top:595px;width:35px;height:1px;background:#b4b4b4"></div>
<div class="rh" style="top:604.5px">32</div>
<svg class="abs" style="left:86px;top:171px" width="18" height="18" viewBox="0 0 18 18"><polygon points="17,1 17,17 1,17" fill="#e9e9e9"/></svg>
<!--/GRID-->
</body></html>
